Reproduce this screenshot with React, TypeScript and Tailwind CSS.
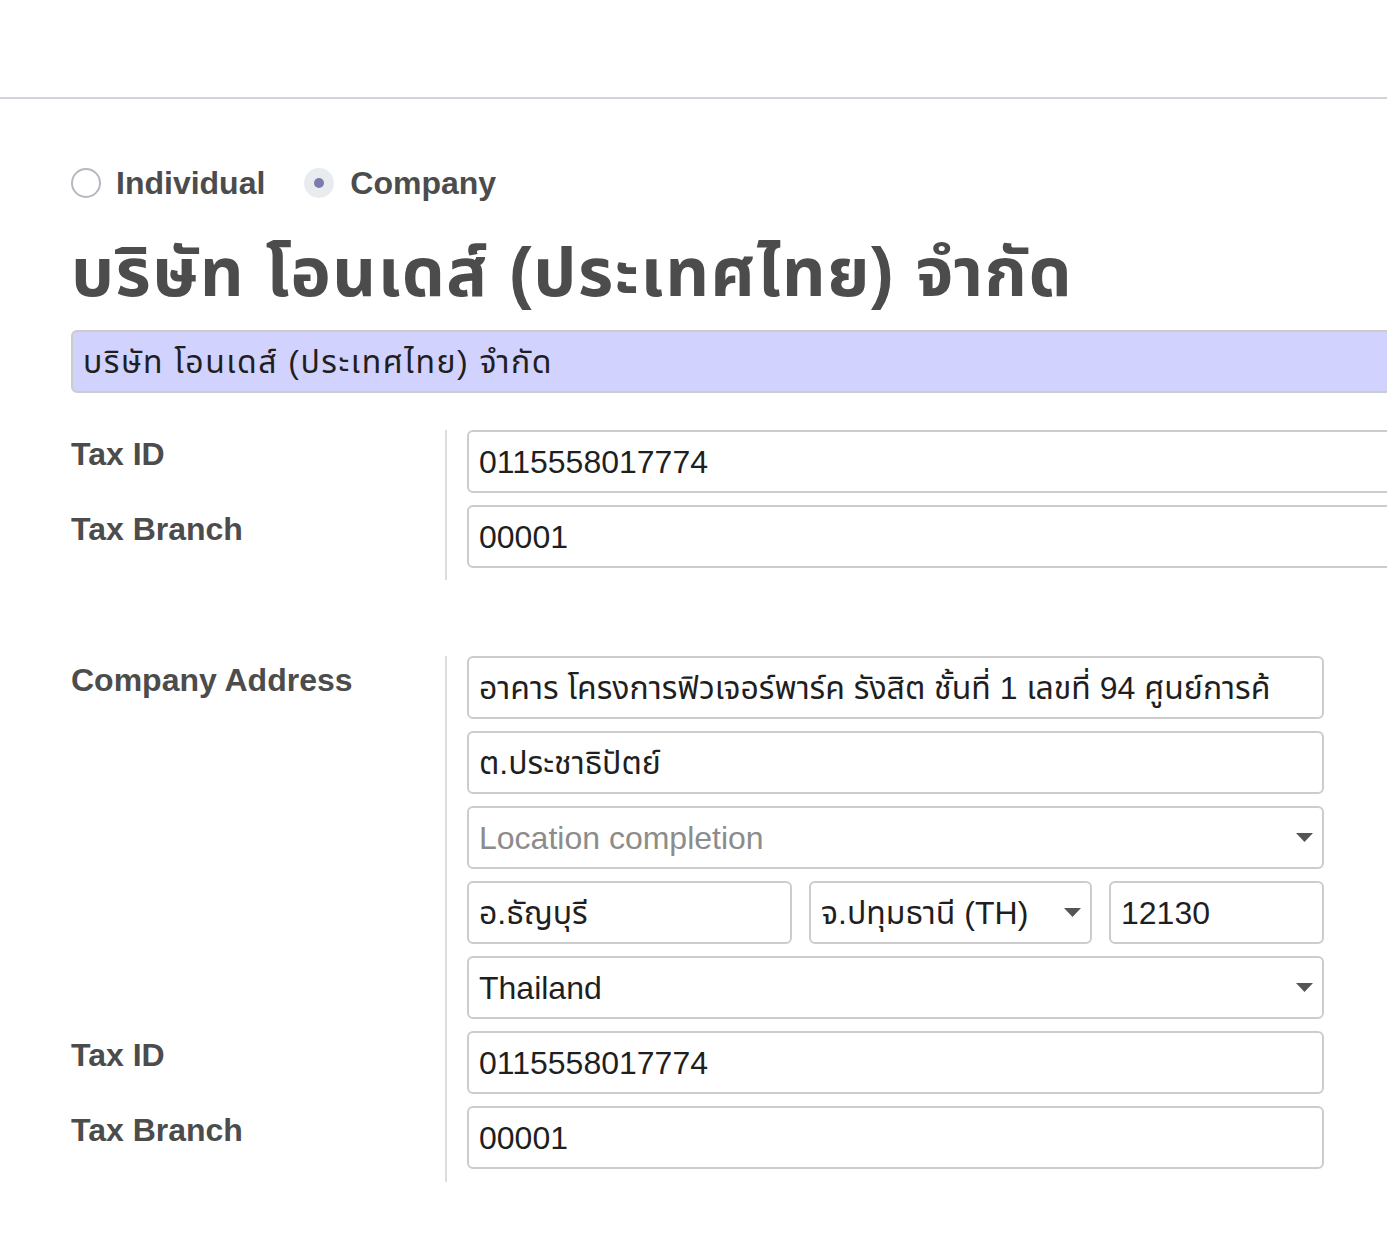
import React from "react";

const Arrow = () => (
  <svg width="17" height="9" viewBox="0 0 17 9" className="shrink-0">
    <path d="M0 0 L17 0 L8.5 9 Z" fill="#555555" />
  </svg>
);

const Field = ({
  children,
  className = "",
  placeholder = false,
  arrow = false,
}: {
  children: React.ReactNode;
  className?: string;
  placeholder?: boolean;
  arrow?: boolean;
}) => (
  <div
    className={`h-[63px] border-2 border-[#cccccc] rounded-[6px] bg-white flex items-center pl-[10px] pr-[9px] gap-2 overflow-hidden ${className}`}
  >
    <div
      className={`flex-1 min-w-0 whitespace-nowrap overflow-hidden text-[32px] leading-[40px] ${
        placeholder ? "text-[#8c8c8c]" : "text-[#1f1f1f]"
      }`}
    >
      {children}
    </div>
    {arrow && <Arrow />}
  </div>
);

const Label = ({ children, h }: { children: React.ReactNode; h: string }) => (
  <div className={`${h} text-[32px] leading-[35px] font-bold text-[#4c4c4c] pt-[7px]`}>{children}</div>
);

export default function App() {
  return (
    <div
      className="w-[1387px] h-[1237px] overflow-hidden bg-white"
      style={{ fontFamily: '"Liberation Sans", Arial, "Noto Sans Thai", Tahoma, sans-serif' }}
    >
      <div className="h-[99px] border-b-2 border-[#ced4da]" />
      <div className="pl-[71px]">
        {/* radios */}
        <div className="mt-[66px] flex items-center h-[36px]">
          <div className="w-[30px] h-[30px] rounded-full border-2 border-[#b4b9bf] bg-white" />
          <span className="ml-[15px] text-[32px] font-bold text-[#4c4c4c] leading-[36px]">Individual</span>
          <div className="ml-[39px] w-[30px] h-[30px] rounded-full bg-[#e9ecef] flex items-center justify-center">
            <div className="w-[10px] h-[10px] rounded-full bg-[#7c7bad]" />
          </div>
          <span className="ml-[16px] text-[32px] font-bold text-[#4c4c4c] leading-[36px]">Company</span>
        </div>

        {/* heading */}
        <h1 className="mt-[30px] text-[68px] leading-[82px] font-bold text-[#4c4c4c] whitespace-nowrap tracking-[1.5px]">
          บริษัท โอนเดส์ (ประเทศไทย) จำกัด
        </h1>

        {/* name input */}
        <div className="mt-[17px] w-[1400px] h-[63px] border-2 border-[#cccccc] rounded-[6px] bg-[#d2d2ff] flex items-center pl-[10px]">
          <span className="text-[32px] leading-[40px] text-[#1f1f1f] whitespace-nowrap tracking-[1.5px]">
            บริษัท โอนเดส์ (ประเทศไทย) จำกัด
          </span>
        </div>

        {/* tax section */}
        <div className="mt-[37px] flex">
          <div className="w-[374px] shrink-0 flex flex-col">
            <Label h="h-[75px]">Tax ID</Label>
            <Label h="h-[75px]">Tax Branch</Label>
          </div>
          <div className="border-l-2 border-[#dddddd] pl-[20px] pb-[12px] flex flex-col gap-[12px] w-[1100px] shrink-0">
            <Field>0115558017774</Field>
            <Field>00001</Field>
          </div>
        </div>

        {/* address section */}
        <div className="mt-[76px] flex">
          <div className="w-[374px] shrink-0 flex flex-col">
            <Label h="h-[375px]">Company Address</Label>
            <Label h="h-[75px]">Tax ID</Label>
            <Label h="h-[75px]">Tax Branch</Label>
          </div>
          <div className="border-l-2 border-[#dddddd] pl-[20px] pb-[13px] flex flex-col gap-[12px] w-[879px] shrink-0">
            <Field>อาคาร โครงการฟิวเจอร์พาร์ค รังสิต ชั้นที่ 1 เลขที่ 94 ศูนย์การค้</Field>
            <Field>ต.ประชาธิปัตย์</Field>
            <Field placeholder arrow>
              Location completion
            </Field>
            <div className="flex gap-[17px]">
              <Field className="w-[325px] shrink-0">อ.ธัญบุรี</Field>
              <Field className="w-[283px] shrink-0" arrow>
                จ.ปทุมธานี (TH)
              </Field>
              <Field className="flex-1">12130</Field>
            </div>
            <Field arrow>Thailand</Field>
            <Field>0115558017774</Field>
            <Field>00001</Field>
          </div>
        </div>
      </div>
    </div>
  );
}
